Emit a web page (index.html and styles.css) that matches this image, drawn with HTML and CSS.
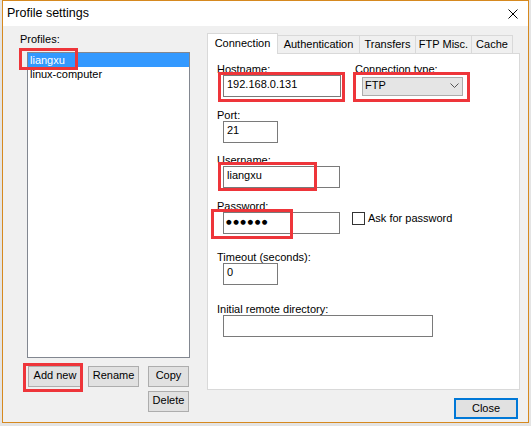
FILE: index.html
```html
<!DOCTYPE html>
<html>
<head>
<meta charset="utf-8">
<link rel="stylesheet" href="styles.css">
</head>
<body>
<div class="window">
  <div class="titlebar">
    <span class="title">Profile settings</span>
    <svg class="close-x" width="10" height="10" viewBox="0 0 10 10"><path d="M0.5 0.5 L9.5 9.5 M9.5 0.5 L0.5 9.5" stroke="#000" stroke-width="1" fill="none"/></svg>
  </div>
  <div class="main">
    <div class="left">
      <div class="label">Profiles:</div>
      <ul class="list">
        <li class="selected">liangxu</li>
        <li>linux-computer</li>
      </ul>
      <div class="btns">
        <div class="btn-row">
          <button class="btn w-add">Add new</button>
          <button class="btn w-rename">Rename</button>
          <button class="btn w-copy push">Copy</button>
        </div>
        <div class="btn-row end">
          <button class="btn w-copy">Delete</button>
        </div>
      </div>
    </div>
    <div class="right">
      <div class="tabs">
        <div class="tab active t1">Connection</div>
        <div class="tab t2">Authentication</div>
        <div class="tab t3">Transfers</div>
        <div class="tab t3">FTP Misc.</div>
        <div class="tab t5">Cache</div>
      </div>
      <div class="panel">
        <div class="row">
          <div class="field col-host">
            <div class="flabel">Hostname:</div>
            <div class="input w-host">192.168.0.131</div>
          </div>
          <div class="field">
            <div class="flabel">Connection type:</div>
            <div class="select"><span>FTP</span><svg class="chev" width="9" height="5" viewBox="0 0 9 5"><polyline points="0.5,0.5 4.5,4.5 8.5,0.5" fill="none" stroke="#555" stroke-width="1"/></svg></div>
          </div>
        </div>
        <div class="field g12">
          <div class="flabel">Port:</div>
          <div class="input w-short">21</div>
        </div>
        <div class="field g11">
          <div class="flabel">Username:</div>
          <div class="input w-user">liangxu</div>
        </div>
        <div class="row g12">
          <div class="field col-pw">
            <div class="flabel">Password:</div>
            <div class="input w-user pw">●●●●●●</div>
          </div>
          <div class="check">
            <span class="box"></span>
            <span class="check-text">Ask for password</span>
          </div>
        </div>
        <div class="field g17">
          <div class="flabel">Timeout (seconds):</div>
          <div class="input w-short">0</div>
        </div>
        <div class="field g18">
          <div class="flabel">Initial remote directory:</div>
          <div class="input w-dir"></div>
        </div>
      </div>
      <div class="footer">
        <button class="btn btn-default">Close</button>
      </div>
    </div>
  </div>
  <div class="mark m1"></div>
  <div class="mark m2"></div>
  <div class="mark m3"></div>
  <div class="mark m4"></div>
  <div class="mark m5"></div>
  <div class="mark m6"></div>
</div>
</body>
</html>
```
FILE: styles.css
```css
* { box-sizing: border-box; }
html, body { margin: 0; padding: 0; }
body {
  background: #e4e4e4;
  font-family: "Liberation Sans", Arial, sans-serif;
  font-size: 11px;
  color: #000;
  width: 531px;
  height: 426px;
  overflow: hidden;
}
.window {
  position: relative;
  margin-left: 2px;
  width: 527px;
  height: 423px;
  border: 1px solid #d6891f;
  background: #f0f0f0;
}
.titlebar {
  height: 25px;
  background: #fff;
  display: flex;
  align-items: flex-start;
}
.title {
  font-size: 12.5px;
  line-height: 25px;
  padding-left: 4px;
}
.close-x {
  margin-left: auto;
  margin-right: 10px;
  margin-top: 8px;
}
.main {
  display: flex;
  padding: 7px 8px 0 17px;
}
.left { width: 170px; }
.label { line-height: 13px; }
.list {
  list-style: none;
  margin: 6px 0 0 7px;
  padding: 0;
  width: 163px;
  height: 306px;
  border: 1px solid #828790;
  background: #fff;
}
.list li {
  line-height: 14px;
  padding-left: 2px;
}
.list li.selected { background: #3399ff; color: #fff; }
.btns { margin: 8px 0 0 8px; width: 161px; }
.btn-row { display: flex; }
.btn-row.end { justify-content: flex-end; margin-top: 4px; }
.btn {
  -webkit-appearance: none;
  appearance: none;
  display: block;
  height: 21px;
  margin: 0;
  padding: 0 0 2px;
  border: 1px solid #adadad;
  background: #e1e1e1;
  font-family: "Liberation Sans", Arial, sans-serif;
  font-size: 11px;
  line-height: 17px;
  color: #000;
  text-align: center;
}
.w-add { width: 54px; }
.w-rename { width: 51px; margin-left: 6px; }
.w-copy { width: 41px; }
.push { margin-left: auto; }
.right { margin-left: 17px; width: 313px; }
.tabs { display: flex; align-items: flex-end; height: 20px; }
.tab {
  height: 18px;
  border: 1px solid #d9d9d9;
  border-bottom: none;
  margin-right: -1px;
  padding-top: 2px;
  line-height: 13px;
  text-align: center;
  white-space: nowrap;
}
.tab.active {
  height: 21px;
  padding-top: 3px;
  margin-bottom: -1px;
  background: #fff;
  position: relative;
  z-index: 1;
}
.t1 { width: 71px; }
.t2 { width: 83px; }
.t3 { width: 57px; }
.t5 { width: 42px; }
.panel {
  width: 313px;
  height: 337px;
  border: 1px solid #d9d9d9;
  background: #fff;
  padding: 9px 0 0 9px;
}
.row { display: flex; }
.col-host { width: 138px; }
.col-pw { width: 135px; }
.g11 { margin-top: 11px; }
.g12 { margin-top: 12px; }
.g17 { margin-top: 17px; }
.g18 { margin-top: 18px; }
.flabel { line-height: 12px; white-space: nowrap; }
.input {
  margin-left: 6px;
  height: 22px;
  border: 1px solid #7a7a7a;
  background: #fff;
  padding: 1px 3px;
  line-height: 15px;
  white-space: nowrap;
}
.w-host { width: 118px; }
.w-short { width: 55px; }
.w-user { width: 117px; }
.w-dir { width: 210px; }
.pw {
  font-family: "DejaVu Sans", sans-serif;
  font-size: 6.5px;
  letter-spacing: 1.5px;
  padding: 2px 3px 0 2px;
}
.select {
  margin: 2px 0 0 7px;
  width: 101px;
  height: 19px;
  background: #e5e5e5;
  border: 1px solid #acacac;
  display: flex;
  align-items: flex-start;
  justify-content: space-between;
  padding: 0 3px 0 2px;
  line-height: 15px;
}
.chev { margin-top: 5px; }
.check {
  margin-top: 12px;
  display: flex;
  align-items: center;
  height: 13px;
}
.box {
  width: 13px;
  height: 13px;
  border: 1px solid #333;
  background: #fff;
}
.check-text { margin-left: 3px; line-height: 13px; }
.footer {
  display: flex;
  justify-content: flex-end;
  margin-top: 8px;
  padding-right: 2px;
}
.btn-default {
  width: 64px;
  border: 2px solid #0078d7;
  padding: 0;
  line-height: 17px;
}
.mark {
  position: absolute;
  border: 3px solid #ee353a;
}
.m1 { left: 16px; top: 47px; width: 59px; height: 22px; }
.m2 { left: 20px; top: 362px; width: 60px; height: 29px; }
.m3 { left: 215px; top: 71px; width: 127px; height: 30px; }
.m4 { left: 350px; top: 71px; width: 117px; height: 30px; }
.m5 { left: 215px; top: 161px; width: 99px; height: 29px; }
.m6 { left: 208px; top: 208px; width: 82px; height: 30px; }
```
